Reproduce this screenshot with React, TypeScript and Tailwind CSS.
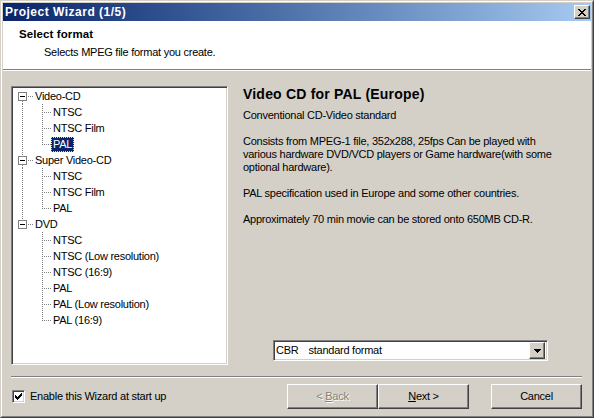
import React from 'react';

type TreeNode = { label: string; children: string[] };

const tree: TreeNode[] = [
  { label: 'Video-CD', children: ['NTSC', 'NTSC Film', 'PAL'] },
  { label: 'Super Video-CD', children: ['NTSC', 'NTSC Film', 'PAL'] },
  {
    label: 'DVD',
    children: ['NTSC', 'NTSC (Low resolution)', 'NTSC (16:9)', 'PAL', 'PAL (Low resolution)', 'PAL (16:9)'],
  },
];

const dots = { stroke: '#808080', strokeWidth: 1, strokeDasharray: '1 1', shapeRendering: 'crispEdges' as const };

const RootGutter: React.FC<{ first: boolean; hasNext: boolean }> = ({ first, hasNext }) => (
  <svg width="20" height="16" className="shrink-0">
    {!first && <line x1="9.5" y1="0" x2="9.5" y2="4" {...dots} />}
    {hasNext && <line x1="9.5" y1="13" x2="9.5" y2="16" {...dots} />}
    <line x1="15" y1="8.5" x2="20" y2="8.5" {...dots} />
    <rect x="5.5" y="4.5" width="8" height="8" fill="#fff" stroke="#808080" shapeRendering="crispEdges" />
    <line x1="7" y1="8.5" x2="12" y2="8.5" stroke="#000" shapeRendering="crispEdges" />
  </svg>
);

const ChildGutter: React.FC<{ parentHasNext: boolean; last: boolean }> = ({ parentHasNext, last }) => (
  <svg width="38" height="16" className="shrink-0">
    {parentHasNext && <line x1="9.5" y1="0" x2="9.5" y2="16" {...dots} />}
    <line x1="29.5" y1="0" x2="29.5" y2={last ? 9 : 16} {...dots} />
    <line x1="31" y1="8.5" x2="38" y2="8.5" {...dots} />
  </svg>
);

const Raised: React.FC<{ className?: string; children?: React.ReactNode }> = ({ className, children }) => (
  <div
    className={`border border-t-white border-l-white border-r-[#404040] border-b-[#404040] shadow-[inset_-1px_-1px_#808080] bg-[#d4d0c8] ${className ?? ''}`}
  >
    {children}
  </div>
);

const Sunken: React.FC<{ className?: string; children?: React.ReactNode }> = ({ className, children }) => (
  <div
    className={`border border-t-[#808080] border-l-[#808080] border-r-white border-b-white shadow-[inset_1px_1px_#404040,inset_-1px_-1px_#d4d0c8] ${className ?? ''}`}
  >
    {children}
  </div>
);

export default function App() {
  return (
    <div className="w-[594px] h-[418px] border border-t-[#d4d0c8] border-l-[#d4d0c8] border-r-[#404040] border-b-[#404040] font-['Liberation_Sans',Arial,sans-serif] text-[11px] tracking-[-0.25px] text-black select-none">
      <div className="h-full border border-t-white border-l-white border-r-[#808080] border-b-[#808080] p-px bg-[#d4d0c8] flex flex-col">
        {/* Title bar */}
        <div className="h-[18px] shrink-0 flex items-center justify-between pl-[2px] pr-[1px] bg-gradient-to-r from-[#0a246a] to-[#a6caf0]">
          <span className="text-white font-bold text-[12px] tracking-[0.5px] leading-none">Project Wizard (1/5)</span>
          <Raised className="w-[16px] h-[14px] flex items-center justify-center">
            <svg width="8" height="7" viewBox="0 0 8 7" shapeRendering="crispEdges">
              <path d="M0 0h2v1h-2zM6 0h2v1h-2zM1 1h2v1h-2zM5 1h2v1h-2zM2 2h4v1h-4zM3 3h2v1h-2zM2 4h4v1h-4zM1 5h2v1h-2zM5 5h2v1h-2zM0 6h2v1h-2zM6 6h2v1h-2z" fill="#000" />
            </svg>
          </Raised>
        </div>

        {/* Header */}
        <div className="h-[49px] shrink-0 bg-white border-b border-[#808080] pt-[6px]">
          <div className="pl-[16px] h-[14px] leading-[14px] font-bold text-[11.5px] tracking-[0.1px]">Select format</div>
          <div className="pl-[41px] mt-[4px] h-[14px] leading-[14px]">Selects MPEG file format you create.</div>
        </div>
        <div className="h-px shrink-0 bg-white" />

        {/* Body */}
        <div className="flex pt-[15px] pl-[8px]">
          <Sunken className="w-[217px] h-[279px] bg-white p-px">
            {tree.map((node, i) => {
              const hasNext = i < tree.length - 1;
              return (
                <div key={node.label}>
                  <div className="h-[16px] flex items-center">
                    <RootGutter first={i === 0} hasNext={hasNext} />
                    <span className="px-[2px] leading-[14px]">{node.label}</span>
                  </div>
                  {node.children.map((c, j) => {
                    const selected = i === 0 && c === 'PAL';
                    return (
                      <div key={c + j} className="h-[16px] flex items-center">
                        <ChildGutter parentHasNext={hasNext} last={j === node.children.length - 1} />
                        <span
                          className={
                            selected
                              ? 'px-[1px] leading-[13px] bg-[#0a246a] text-white border border-dotted border-[#e8d890]'
                              : 'px-[2px] leading-[14px]'
                          }
                        >
                          {c}
                        </span>
                      </div>
                    );
                  })}
                </div>
              );
            })}
          </Sunken>

          <div className="flex-1 ml-[15px] flex flex-col h-[279px]">
            <div className="h-[16px] leading-[16px] font-bold text-[14px] tracking-[0.2px]">Video CD for PAL (Europe)</div>
            <div className="mt-[7px] leading-[13px]">
              <p>Conventional CD-Video standard</p>
              <p className="mt-[13px]">
                Consists from MPEG-1 file, 352x288, 25fps Can be played with
                <br />
                various hardware DVD/VCD players or Game hardware(with some
                <br />
                optional hardware).
              </p>
              <p className="mt-[13px]">PAL specification used in Europe and some other countries.</p>
              <p className="mt-[13px]">Approximately 70 min movie can be stored onto 650MB CD-R.</p>
            </div>

            <Sunken className="mt-auto mb-[4px] ml-[30px] w-[275px] h-[21px] bg-white flex items-center pl-[2px] pr-[2px]">
              <span className="flex-1 leading-[13px]">
                <span>CBR</span>
                <span className="ml-[10px]">standard format</span>
              </span>
              <Raised className="w-[16px] h-[17px] flex items-center justify-center">
                <svg width="7" height="4" viewBox="0 0 7 4" shapeRendering="crispEdges">
                  <path d="M0 0h7v1h-7zM1 1h5v1h-5zM2 2h3v1h-3zM3 3h1v1h-1z" fill="#000" />
                </svg>
              </Raised>
            </Sunken>
          </div>
        </div>

        {/* Separator */}
        <div className="mt-[11px] ml-[8px] w-[571px] border-t border-[#808080] border-b border-b-white" />

        {/* Bottom row */}
        <div className="mt-[6px] h-[25px] flex items-center pl-[9px]">
          <Sunken className="w-[13px] h-[13px] bg-white flex items-center justify-center">
            <svg width="7" height="7" viewBox="0 0 7 7" shapeRendering="crispEdges">
              <path d="M6 0h1v3h-1zM5 1h1v3h-1zM4 2h1v3h-1zM3 3h1v3h-1zM2 4h1v3h-1zM1 3h1v3h-1zM0 2h1v3h-1z" fill="#000" />
            </svg>
          </Sunken>
          <span className="ml-[5px] leading-[13px]">Enable this Wizard at start up</span>

          <div className="ml-auto flex items-center">
            <Raised className="w-[91px] h-[25px] flex items-center justify-center text-[#808080] [text-shadow:1px_1px_0_#fff]">
              <span>
                &lt; <span className="underline">B</span>ack
              </span>
            </Raised>
            <Raised className="w-[91px] h-[25px] flex items-center justify-center">
              <span>
                <span className="underline">N</span>ext &gt;
              </span>
            </Raised>
            <Raised className="ml-[22px] mr-[9px] w-[91px] h-[25px] flex items-center justify-center">
              Cancel
            </Raised>
          </div>
        </div>
      </div>
    </div>
  );
}
